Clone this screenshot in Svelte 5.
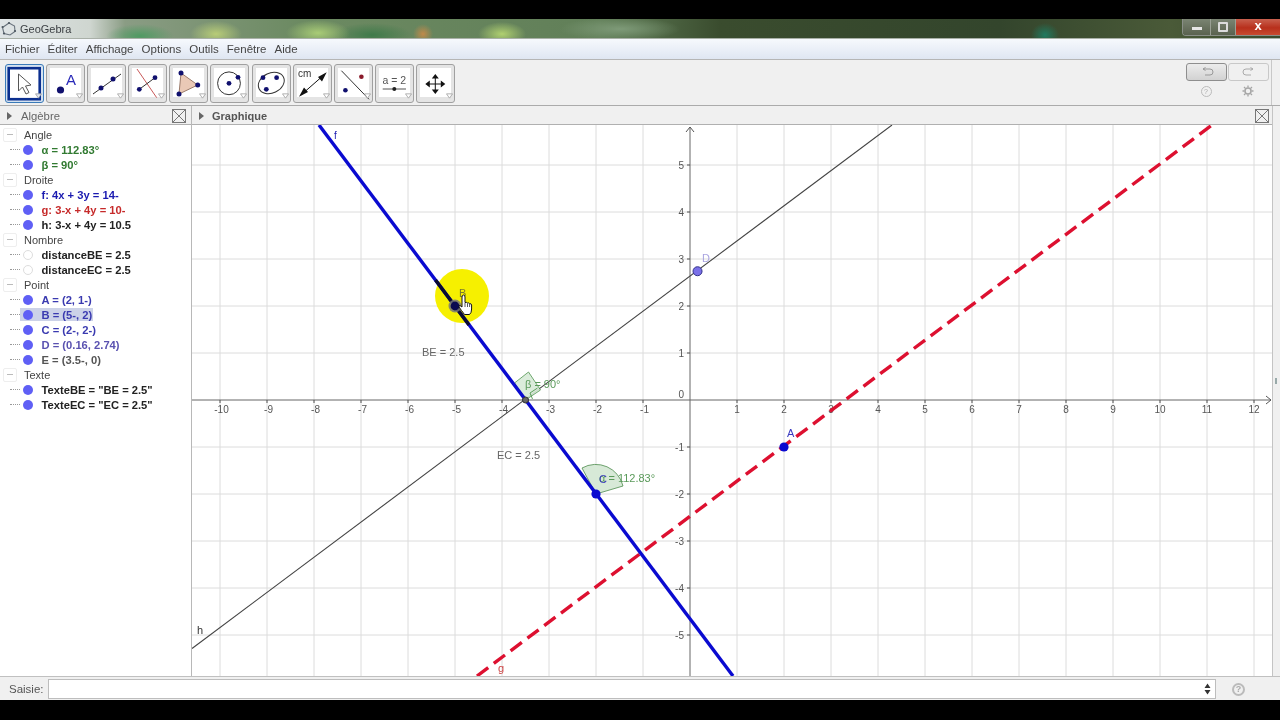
<script>
  const X = (x) => 690 - 192 + 47 * x;
  const Y = (y) => 400 - 125 + 47 * y;
  const W = 1080, H = 551;
  const vgrid = []; for (let i = -10; i <= 12; i++) if (i !== 0) vgrid.push(i);
  const hgrid = []; for (let i = -5; i <= 5; i++) if (i !== 0) hgrid.push(i);

  const menus = ['Fichier', 'Éditer', 'Affichage', 'Options', 'Outils', 'Fenêtre', 'Aide'];
  const tools = ['move','point','line','perp','poly','circle','conic','measure','reflect','slider','pan'];

  const tree = [
    { head: 'Angle', items: [
      { t: 'α = 112.83°', c: 'green' }, { t: 'β = 90°', c: 'green' } ] },
    { head: 'Droite', items: [
      { t: 'f: 4x + 3y = 14-', c: 'blue' }, { t: 'g: 3-x + 4y = 10-', c: 'red' }, { t: 'h: 3-x + 4y = 10.5', c: 'black' } ] },
    { head: 'Nombre', items: [
      { t: 'distanceBE = 2.5', c: 'black', off: true }, { t: 'distanceEC = 2.5', c: 'black', off: true } ] },
    { head: 'Point', items: [
      { t: 'A = (2, 1-)', c: 'indigo' }, { t: 'B = (5-, 2)', c: 'indigo', sel: true }, { t: 'C = (2-, 2-)', c: 'indigo' }, { t: 'D = (0.16, 2.74)', c: 'violet' }, { t: 'E = (3.5-, 0)', c: 'grey' } ] },
    { head: 'Texte', items: [
      { t: 'TexteBE = "BE = 2.5"', c: 'black' }, { t: 'TexteEC = "EC = 2.5"', c: 'black' } ] },
  ];
</script>

<div class="screen">
  <div class="bar-black top"></div>
  <div class="titlebar">
    <svg class="logo" width="16" height="16" viewBox="0 0 16 16"><path d="M8 2 L13.5 5 L14 10.5 L9 14 L3 12.5 L1.5 6.5 Z" fill="none" stroke="#6a747e" stroke-width="1.1"/><circle cx="8" cy="2" r="1.1" fill="#4c5660"/><circle cx="14" cy="10" r="1.1" fill="#4c5660"/><circle cx="3" cy="12.5" r="1.1" fill="#4c5660"/><circle cx="1.6" cy="6" r="1.1" fill="#4c5660"/></svg>
    <span class="title">GeoGebra</span>
    <div class="winbtns">
      <div class="wb min"><span></span></div>
      <div class="wb max"><span></span></div>
      <div class="wb close">x</div>
    </div>
  </div>
  <div class="menubar">
    {#each menus as m}<span>{m}</span>{/each}
  </div>
  <div class="toolbar">
    <div class="tools">
      {#each tools as t, i}
        <div class="tool" class:active={i === 0}>
          <svg width="37" height="37" viewBox="1 1 37 37">
            {#if t === 'move'}
              <rect x="3.7" y="4.2" width="31" height="31" fill="#fff" stroke="#0b2f8f" stroke-width="2.6"/>
              <path d="M13.5 10 L13.5 27 L17.5 23 L21 30 L24 28.5 L20.5 22 L26 21 Z" fill="#fff" stroke="#555" stroke-width="1"/>
            {:else if t === 'point'}
              <circle cx="14.5" cy="26" r="3.6" fill="#10106e"/>
              <text x="20" y="20.5" class="tA">A</text>
            {:else if t === 'line'}
              <line x1="6" y1="30" x2="34" y2="10" stroke="#333" stroke-width="1"/>
              <circle cx="14" cy="24" r="2.5" fill="#10106e"/><circle cx="26" cy="15" r="2.5" fill="#10106e"/>
            {:else if t === 'perp'}
              <line x1="9" y1="5" x2="28.7" y2="33.7" stroke="#c95a5a" stroke-width="1"/>
              <line x1="11.3" y1="25.3" x2="27" y2="13.7" stroke="#333" stroke-width="1"/>
              <circle cx="11.3" cy="25.3" r="2.4" fill="#10106e"/><circle cx="27" cy="13.7" r="2.4" fill="#10106e"/>
            {:else if t === 'poly'}
              <path d="M12 9 L28.7 21 L10 30 Z" fill="#eac9b6" stroke="#9a7a6a" stroke-width="1"/>
              <circle cx="12" cy="9" r="2.5" fill="#10106e"/><circle cx="28.7" cy="21" r="2.5" fill="#10106e"/><circle cx="10" cy="30" r="2.5" fill="#10106e"/>
            {:else if t === 'circle'}
              <circle cx="19" cy="19.3" r="11.4" fill="none" stroke="#333" stroke-width="1"/>
              <circle cx="19" cy="19.3" r="2.4" fill="#10106e"/><circle cx="28" cy="13.3" r="2.4" fill="#10106e"/>
            {:else if t === 'conic'}
              <ellipse cx="19.3" cy="19" rx="13.5" ry="10" transform="rotate(-25 19.3 19)" fill="none" stroke="#333" stroke-width="1"/>
              <circle cx="11" cy="13.7" r="2.4" fill="#10106e"/><circle cx="24.6" cy="13.7" r="2.4" fill="#10106e"/><circle cx="14.3" cy="25.3" r="2.4" fill="#10106e"/>
            {:else if t === 'measure'}
              <text x="5" y="13" class="tcm">cm</text>
              <line x1="8" y1="31" x2="32" y2="10" stroke="#111" stroke-width="1"/>
              <path d="M6 32.7 L15 28 L11 23.5 Z M33.7 8.3 L25 13 L29 17.5 Z" fill="#111"/>
            {:else if t === 'reflect'}
              <line x1="7.4" y1="6.7" x2="35" y2="35.3" stroke="#333" stroke-width="1"/>
              <circle cx="11.4" cy="26.3" r="2.3" fill="#10106e"/><circle cx="27.4" cy="12.7" r="2.3" fill="#8a1a2a"/>
            {:else if t === 'slider'}
              <text x="19.3" y="19.5" class="tslider">a = 2</text>
              <line x1="7.7" y1="25" x2="31" y2="25" stroke="#555" stroke-width="1"/>
              <circle cx="19.3" cy="25" r="2" fill="#222"/>
            {:else if t === 'pan'}
              <path d="M19.3 12 V28 M11.3 20 H27.3" stroke="#111" stroke-width="1"/>
              <path d="M19.3 10 L15.8 14.5 H22.8 Z M19.3 30 L15.8 25.5 H22.8 Z M9.3 20 L13.8 16.5 V23.5 Z M29.3 20 L24.8 16.5 V23.5 Z" fill="#111"/>
            {/if}
          </svg>
          <svg class="caret" width="7" height="6" viewBox="0 0 8 7"><path d="M0.5 1 H7.5 L4 6 Z" fill={i === 0 ? '#dfe6f4' : '#fff'} stroke="#999" stroke-width="0.9"/></svg>
        </div>
      {/each}
    </div>
    <div class="undo-area">
      <div class="undo-row">
        <div class="ubtn pressed"><svg width="16" height="10" viewBox="0 0 16 10"><path d="M4 2 H11 Q14 2 14 5 Q14 8 11 8 H6 M4 2 L6.5 0.5 M4 2 L6.5 3.5" fill="none" stroke="#999" stroke-width="1"/></svg></div>
        <div class="ubtn"><svg width="16" height="10" viewBox="0 0 16 10"><path d="M12 2 H5 Q2 2 2 5 Q2 8 5 8 H10 M12 2 L9.5 0.5 M12 2 L9.5 3.5" fill="none" stroke="#aaa" stroke-width="1"/></svg></div>
      </div>
      <div class="undo-row icons">
        <span class="qm small">?</span>
        <svg width="12" height="12" viewBox="0 0 12 12"><circle cx="6" cy="6" r="3" fill="none" stroke="#a5a5a5" stroke-width="1.5"/><path d="M6 0.5 V2.5 M6 9.5 V11.5 M0.5 6 H2.5 M9.5 6 H11.5 M2 2 L3.4 3.4 M8.6 8.6 L10 10 M10 2 L8.6 3.4 M3.4 8.6 L2 10" stroke="#a5a5a5" stroke-width="1.3"/></svg>
      </div>
    </div>
  </div>

  <div class="main">
    <aside class="algebra">
      <div class="phead">
        <span class="tri"></span><span class="ptitle">Algèbre</span>
        <span class="closebox"><svg width="14" height="14" viewBox="0 0 14 14"><rect x="0.5" y="0.5" width="13" height="13" fill="none" stroke="#777"/><path d="M1 1 L13 13 M13 1 L1 13" stroke="#777"/></svg></span>
      </div>
      <div class="tree">
        {#each tree as g}
          <div class="thead"><span class="minus"><i></i></span><span>{g.head}</span></div>
          {#each g.items as it}
            <div class="titem">
              <span class="dots"></span>
              <span class="chip" class:sel={it.sel}>
                <span class="marble" class:off={it.off}></span>
                <span class="tlabel {it.c}">{it.t}</span>
              </span>
            </div>
          {/each}
        {/each}
      </div>
    </aside>
    <section class="graphics">
      <div class="phead">
        <span class="tri"></span><span class="ptitle strong">Graphique</span>
        <span class="closebox far"><svg width="14" height="14" viewBox="0 0 14 14"><rect x="0.5" y="0.5" width="13" height="13" fill="none" stroke="#777"/><path d="M1 1 L13 13 M13 1 L1 13" stroke="#777"/></svg></span>
      </div>
      <svg class="plot" width={W} height={H} viewBox="0 0 {W} {H}">
        {#each vgrid as i}<line x1={X(i)} y1="0" x2={X(i)} y2={H} class="grid"/>{/each}
        {#each hgrid as i}<line x1="0" y1={Y(-i)} x2={W} y2={Y(-i)} class="grid"/>{/each}

        <line x1="0" y1={Y(0)} x2={W - 1} y2={Y(0)} class="axis"/>
        <line x1={X(0)} y1="2" x2={X(0)} y2={H} class="axis"/>
        <path d="M{W - 6} {Y(0) - 4} L{W - 1} {Y(0)} L{W - 6} {Y(0) + 4}" class="arrow"/>
        <path d="M{X(0) - 4} 7 L{X(0)} 2 L{X(0) + 4} 7" class="arrow"/>
        {#each vgrid as i}
          <line x1={X(i)} y1={Y(0)} x2={X(i)} y2={Y(0) + 3} class="tick"/>
          <text x={X(i) + (i < 0 ? 1.5 : 0)} y={Y(0) + 13} class="num" text-anchor="middle">{i < 0 ? '-' + (-i) : i}</text>
        {/each}
        {#each hgrid as i}
          <line x1={X(0) - 3} y1={Y(-i)} x2={X(0)} y2={Y(-i)} class="tick"/>
          <text x={X(0) - 6} y={Y(-i) + 4} class="num" text-anchor="end">{i < 0 ? '-' + (-i) : i}</text>
        {/each}
        <text x={X(0) - 6} y={Y(0) - 2} class="num" text-anchor="end">0</text>

        <circle cx="270" cy="171" r="27" fill="#f6f000"/>

        <!-- h -->
        <line x1="0" y1="523.5" x2="700" y2="0" stroke="#444" stroke-width="1.1"/>
        <!-- g -->
        <line x1="285" y1="551" x2="1020" y2="0" stroke="#dd1030" stroke-width="3.4" stroke-dasharray="14 7"/>

        <!-- angle markers -->
        <path d="M{X(-3.5)} {Y(0)} L{X(-3.5) - 11} {Y(0) - 17} L{X(-3.5) + 3} {Y(0) - 28} L{X(-3.5) + 15} {Y(0) - 10} Z" fill="#d8ead8" stroke="#3e8a3e" stroke-width="0.8" opacity="0.9"/>
        <path d="M{X(-3.5) + 4.5} {Y(0) - 7} L{X(-3.5) + 12} {Y(0) - 12} M{X(-3.5) + 4.5} {Y(0) - 7} L{X(-3.5) + 7} {Y(0) - 1}" stroke="#3e8a3e" stroke-width="0.8" fill="none"/>
        <path d="M{X(-2)} {Y(2)} L390 343 A 28 28 0 0 1 431 361 Z" fill="#d7e9d7" stroke="#4c8c4c" stroke-width="0.8" />

        <!-- f -->
        <line x1="127" y1="0" x2="541" y2="551" stroke="#0a0ad0" stroke-width="3.4"/>
        <line x1="243.5" y1="155" x2="277" y2="200" stroke="#0a0a30" stroke-width="3.4"/>

        <!-- points -->
        <circle cx={X(-3.5)} cy={Y(0)} r="3" fill="#666" stroke="#333"/>
        <circle cx={X(0.16)} cy={Y(-2.74)} r="4.5" fill="#7a70e8" stroke="#33338a" stroke-width="1"/>
        <circle cx={X(2)} cy={Y(1)} r="4.6" fill="#0a0ad0"/>
        <circle cx={X(-2)} cy={Y(2)} r="4.6" fill="#0a0ad0"/>
        <circle cx={X(-5)} cy={Y(-2)} r="6.5" fill="#777" opacity="0.85"/>
        <circle cx={X(-5)} cy={Y(-2)} r="4.4" fill="#0a0a50"/>

        <!-- labels -->
        <text x="142" y="14" class="lbl blue">f</text>
        <text x="5" y="509" class="lbl dark">h</text>
        <text x="306" y="547" class="lbl redl">g</text>
        <text x="510" y="137" class="lbl violetl">D</text>
        <text x="595" y="312" class="lbl bluep">A</text>
        <text x="267" y="172" class="lbl olive">B</text>
        <text x="230" y="231" class="lbl grey">BE = 2.5</text>
        <text x="305" y="334" class="lbl grey">EC = 2.5</text>
        <text x="333" y="263" class="ang">β = 90°</text>
        <text x="407" y="357" class="ang">α = 112.83°</text>
        <text x="407" y="358" class="lbl bluep">C</text>

        <!-- hand cursor -->
        <g transform="translate(265 170)">
          <path d="M5 2 Q5 0 6.5 0 Q8 0 8 2 V7.5 Q10 7 10.5 8 Q12 7.5 12.6 8.7 Q14.2 8.2 14.6 10 V14 Q14.6 18 12.5 19.5 H7.5 Q6 17.5 4.5 15.5 L2 12 Q1.5 10.5 3 10.5 L5 12 Z" fill="#fff" stroke="#111" stroke-width="1"/>
          <path d="M8 8 V12 M10.5 8.5 V12 M12.6 9 V12" stroke="#111" stroke-width="0.7"/>
        </g>
      </svg>
    </section>
    <div class="sidestrip"><span class="grip"></span></div>
  </div>

  <div class="inputbar">
    <label class="sais" for="saisie">Saisie:</label>
    <div class="inputwrap">
      <input id="saisie" />
      <svg width="7" height="12" viewBox="0 0 7 12"><path d="M3.5 0.5 L6.5 5 H0.5 Z M3.5 11.5 L6.5 7 H0.5 Z" fill="#333"/></svg>
    </div>
    <span class="qm big">?</span>
  </div>
  <div class="bar-black bottom"></div>
</div>

<style>
  :global(body) { margin: 0; background: #000; }
  .screen {
    width: 1280px; height: 720px; overflow: hidden; display: flex; flex-direction: column;
    font-family: "Liberation Sans", Arial, sans-serif; background: #f0f0f0; color: #333;
    filter: blur(0.35px);
  }
  .bar-black { background: #000; flex: none; }
  .top { height: 19px; }
  .bottom { height: 20px; }

  .titlebar {
    height: 20px; flex: none; box-sizing: border-box; display: flex; align-items: center; padding-left: 1px;
    border-bottom: 1px solid #a9b0a8;
    background:
      radial-gradient(ellipse 34px 12px at 140px 17px, #4f9a62, transparent),
      radial-gradient(ellipse 26px 13px at 216px 15px, #b8cc78, transparent),
      radial-gradient(ellipse 32px 13px at 318px 14px, #a9cc76, transparent),
      radial-gradient(ellipse 10px 10px at 423px 15px, #c08a4a, transparent),
      radial-gradient(ellipse 40px 12px at 372px 16px, #3f7a4a, transparent),
      radial-gradient(ellipse 24px 12px at 502px 15px, #b0d070, transparent),
      radial-gradient(ellipse 60px 12px at 620px 10px, #7e9a78, transparent),
      radial-gradient(ellipse 14px 12px at 1045px 16px, #1f7a60, transparent),
      linear-gradient(90deg, #dfe4e6 0, #cfd6d0 90px, #8a9c84 125px, #6c8a62 300px, #617f58 600px, #3a4c2e 720px, #33452c 1000px, #4a5a38 1170px, #3a4a2c 1280px);
    position: relative;
  }
  .logo { margin-right: 2px; }
  .title { font-size: 11px; color: #3c4044; margin-left: 1px; }
  .winbtns {
    position: absolute; right: 0; top: 0; height: 17px; width: 98px; display: flex; box-sizing: border-box;
    border: 1px solid #8a8f88; border-top: 0; border-right: 0; border-radius: 0 0 0 4px; overflow: hidden;
  }
  .wb { display: flex; align-items: center; justify-content: center; }
  .wb.min { width: 27px; background: linear-gradient(#7a8472, #5a624f); }
  .wb.min span { width: 10px; height: 3px; background: #e6e6e6; margin-top: 3px; }
  .wb.max { width: 25px; box-sizing: border-box; background: linear-gradient(#7a8472, #5a624f); border-left: 1px solid #9aa094; }
  .wb.max span { width: 6px; height: 6px; border: 2px solid #dcdcdc; border-radius: 1px; }
  .wb.close { flex: 1; background: linear-gradient(#c8604e, #b8301c 55%, #c84a30); color: #fff; font-weight: bold; font-size: 13px; line-height: 1; border-left: 1px solid #9aa094; padding-bottom: 4px; box-sizing: border-box; }

  .menubar {
    height: 21px; flex: none; box-sizing: border-box; display: flex; align-items: center; gap: 8.1px; padding-left: 5px;
    font-size: 11.5px; color: #444;
    background: linear-gradient(#f6f9fd, #dfe6f2);
    border-bottom: 1px solid #b5b5b5;
  }

  .toolbar { height: 46px; flex: none; box-sizing: border-box; border-bottom: 1px solid #ababab; display: flex; justify-content: space-between; background: #f0f0f0; }
  .tools { display: flex; gap: 2.2px; padding: 4px 0 0 4.5px; align-items: flex-start; }
  .tool {
    width: 37px; height: 37px; flex: none; border: 1px solid #a0a0a0; border-radius: 3px;
    background: linear-gradient(#fff, #fff) 3px 3px / 31px 29px no-repeat, #e4e4e4;
    position: relative;
  }
  .tool > svg:first-child { display: block; }
  .tool.active { border-color: #3a7ab8; background: #d4e2f0; }
  .caret { position: absolute; right: 1px; bottom: 3px; }
  .tA { font: 15px "Liberation Sans", sans-serif; fill: #2a2ab8; }
  .tcm { font: 10px "Liberation Sans", sans-serif; fill: #333; }
  .tslider { font: 10.5px "Liberation Sans", sans-serif; fill: #555; text-anchor: middle; }

  .undo-area { width: 86px; flex: none; display: flex; flex-direction: column; padding: 3px 3px 0 0; box-sizing: border-box; border-right: 1px solid #c8c8c8; margin-right: 8px; }
  .undo-row { display: flex; gap: 1px; }
  .undo-row.icons { margin-top: 4px; gap: 30.5px; padding-left: 14.5px; align-items: center; height: 12px; }
  .ubtn { width: 39px; height: 16px; flex: none; border: 1px solid #c8c8c8; border-radius: 3px; display: flex; align-items: center; justify-content: center; }
  .ubtn.pressed { background: linear-gradient(#ececec, #d2d2d2); border-color: #8e8e8e; }
  .qm { display: inline-flex; align-items: center; justify-content: center; border-radius: 50%; color: #aaa; box-sizing: border-box; flex: none; }
  .qm.small { width: 11px; height: 11px; border: 1px solid #bbb; font-size: 7px; }
  .qm.big { width: 13px; height: 13px; border: 2px solid #bbb; font-size: 9px; font-weight: bold; margin-left: 16px; color: #aaa; }

  .main { flex: 1; display: flex; min-height: 0; }
  .algebra { width: 191px; flex: none; background: #fff; border-right: 1px solid #b8b8b8; }
  .graphics { flex: 1; min-width: 0; display: flex; flex-direction: column; background: #fff; }
  .sidestrip { width: 8px; flex: none; background: #f0f0f0; border-left: 1px solid #c4c4c4; box-sizing: border-box; display: flex; align-items: center; }
  .grip { width: 2px; height: 6px; background: #9aa; margin-left: 2px; margin-top: -20px; }

  .phead { height: 19px; flex: none; box-sizing: border-box; background: #f0f0f0; border-bottom: 1px solid #b0b0b0; display: flex; align-items: center; padding: 1px 0 0 7px; position: relative; }
  .tri { width: 0; height: 0; border-left: 5px solid #666; border-top: 4px solid transparent; border-bottom: 4px solid transparent; margin-right: 9px; }
  .ptitle { font-size: 11.3px; color: #666; }
  .ptitle.strong { font-weight: bold; font-size: 11px; color: #555; margin-left: -1px; }
  .closebox { position: absolute; right: 5px; top: 3px; height: 14px; }
  .closebox.far { right: 3px; }
  .closebox svg { display: block; }

  .tree { padding-top: 2px; }
  .thead { height: 15px; display: flex; align-items: center; font-size: 11px; color: #444; }
  .minus { width: 12px; height: 12px; border: 1px solid #eee; border-radius: 2px; margin: 0 7px 0 3px; display: flex; align-items: center; justify-content: center; box-sizing: content-box; flex: none; }
  .minus i { display: block; width: 6px; height: 1px; background: #bbb; }
  .titem { height: 15px; display: flex; align-items: center; font-size: 11.2px; font-weight: bold; }
  .dots { width: 10px; border-top: 1px dotted #999; margin-left: 10px; flex: none; }
  .chip { display: flex; align-items: center; height: 13px; padding-right: 1px; }
  .chip.sel { background: #ccd2e8; }
  .marble { width: 10px; height: 10px; border-radius: 50%; background: #5f5ff5; flex: none; margin-left: 2.5px; }
  .marble.off { background: #fff; border: 1px solid #ddd; box-sizing: border-box; }
  .tlabel { margin-left: 9px; white-space: nowrap; }
  .tlabel.green { color: #317a31; }
  .tlabel.blue { color: #1a1ab0; }
  .tlabel.red { color: #c62a2a; }
  .tlabel.black { color: #222; }
  .tlabel.indigo { color: #3a3ab0; }
  .tlabel.violet { color: #5a52b0; }
  .tlabel.grey { color: #555; }

  .plot { display: block; flex: none; font-family: "Liberation Sans", Arial, sans-serif; }
  .grid { stroke: #dcdcdc; stroke-width: 1; }
  .axis { stroke: #666; stroke-width: 1; }
  .arrow { fill: none; stroke: #555; stroke-width: 1; }
  .tick { stroke: #555; stroke-width: 1; }
  .num { font-size: 10px; fill: #555; }
  .lbl { font-size: 11px; }
  .lbl.blue { fill: #1a1ab0; font-size: 10px; }
  .lbl.dark { fill: #333; }
  .lbl.redl { fill: #c44; }
  .lbl.violetl { fill: #a9a4e0; }
  .lbl.bluep { fill: #3a3ac0; }
  .lbl.olive { fill: #7a7a30; }
  .lbl.grey { fill: #666; }
  .ang { font-size: 11px; fill: #5a9a5a; }

  .inputbar { height: 24px; flex: none; box-sizing: border-box; border-top: 1px solid #c0c0c0; display: flex; align-items: center; padding: 1px 0 0 9px; background: #f0f0f0; font-size: 11.5px; }
  .sais { color: #555; width: 39px; flex: none; }
  .inputwrap { width: 1168px; height: 20px; flex: none; box-sizing: border-box; border: 1px solid #bdbdbd; background: #fff; display: flex; align-items: center; padding-right: 4px; }
  .inputwrap input { flex: 1; min-width: 0; border: 0; outline: 0; background: transparent; padding: 0; height: 100%; }
</style>
